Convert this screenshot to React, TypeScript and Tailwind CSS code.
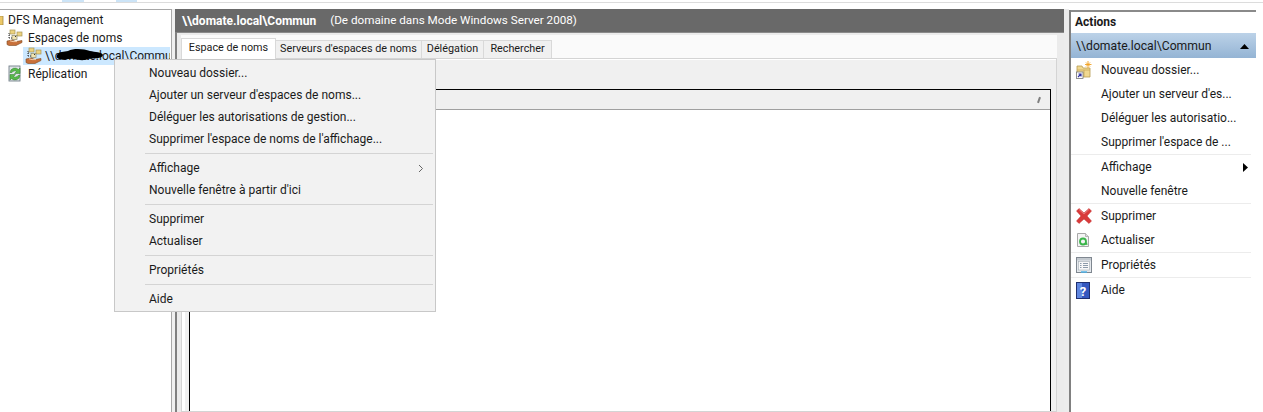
import React from "react";

const font = { fontFamily: 'Roboto, "Noto Sans", sans-serif' };

function NsIcon() {
  return (
    <svg width="18" height="18" viewBox="0 0 18 18" className="shrink-0">
      <rect x="4" y="1" width="5" height="4" fill="#ecd27e" stroke="#a79658" strokeWidth="0.7" />
      <rect x="11" y="3" width="5" height="4" fill="#ecd27e" stroke="#a79658" strokeWidth="0.7" />
      <rect x="6" y="6.500" width="5" height="4" fill="#f2e3ae" stroke="#8a8a70" strokeWidth="0.7" />
      <path d="M3 4v6M3 6h1M3 9h3M9 7.500h2" stroke="#222" strokeWidth="0.900" strokeDasharray="1 1" fill="none" />
      <path d="M1 12 L6 11 L10 12.500 L16 11.500 L16 13.500 L10 16.500 L3 16.500 L1 15.500Z" fill="#c8703a" stroke="#7d4a22" strokeWidth="0.600" />
      <path d="M4 11.800l3 .8h4" stroke="#f3c9a3" strokeWidth="1" fill="none" />
    </svg>
  );
}

function ReplIcon() {
  return (
    <svg width="18" height="18" viewBox="0 0 18 18" className="shrink-0">
      <rect x="3" y="1" width="11" height="15" fill="#dfe4e8" stroke="#74808a" strokeWidth="0.900" />
      <path d="M4 7.500a5 5 0 0 1 8.500-3l1.500-1.500v5.500h-5.500l2-2a3 3 0 0 0-4.500 1Z" fill="#58ba4c" stroke="#2f7d2a" strokeWidth="0.500" />
      <path d="M14 10.500a5 5 0 0 1-8.500 3L4 15V9.500h5.500l-2 2a3 3 0 0 0 4.500-1Z" fill="#58ba4c" stroke="#2f7d2a" strokeWidth="0.500" />
    </svg>
  );
}

function NewFolderIcon() {
  return (
    <svg width="16" height="18" viewBox="0 0 16 18">
      <path d="M1 5h5l1 2h7v9H1Z" fill="#f0d890" stroke="#b89c50" strokeWidth="0.800" />
      <path d="M1 9h13M8 9v7" stroke="#c8a858" strokeWidth="0.800" />
      <path d="M12 0v7M9 3.500h6.500M10 1.500l4 4M14 1.500l-4 4" stroke="#f0a020" strokeWidth="0.900" />
      <rect x="0.500" y="11" width="6.500" height="6.500" fill="#fff" stroke="#777" strokeWidth="0.800" />
      <path d="M2 16l3-3M2.500 13H5v2.500" stroke="#3030a0" strokeWidth="1.200" fill="none" />
    </svg>
  );
}

function XIcon() {
  return (
    <svg width="16" height="16" viewBox="0 0 16 16">
      <path d="M0.500 3 L3 0.500 L8 5 L13 0.500 L15.500 3 L11 8 L15.500 13 L13 15.500 L8 11 L3 15.500 L0.500 13 L5 8Z" fill="#d93a3a" stroke="#c02828" strokeWidth="0.500" />
      <path d="M3 1.500L8 6l5-4.500" stroke="#ee8a8a" strokeWidth="0.800" fill="none" />
    </svg>
  );
}

function RefreshIcon() {
  return (
    <svg width="14" height="16" viewBox="0 0 14 16">
      <path d="M1.500 1.500h8l3 3v10h-11Z" fill="#f4f4f4" stroke="#a8a8a8" strokeWidth="1" />
      <path d="M9.500 1.500v3h3" fill="#ddd" stroke="#a8a8a8" strokeWidth="0.800" />
      <circle cx="7" cy="9.500" r="3" fill="none" stroke="#3bb54a" strokeWidth="1.800" />
      <path d="M8.500 12.500l3 .5-.5-3" fill="#3bb54a" />
    </svg>
  );
}

function PropsIcon() {
  return (
    <svg width="16" height="16" viewBox="0 0 16 16">
      <rect x="0.500" y="0.500" width="15" height="15" fill="#e4e8ec" stroke="#7f8790" strokeWidth="1" />
      <rect x="1" y="1" width="14" height="2.500" fill="#c3c9cf" />
      <rect x="2.500" y="4.500" width="11" height="8.500" fill="#f8f8f8" stroke="#a5adb5" strokeWidth="0.600" />
      <path d="M4 6.500h1.500M7 6.500h5M4 8.500h1.500M7 8.500h5M4 10.500h1.500M7 10.500h5" stroke="#8090a0" strokeWidth="0.900" />
      <path d="M5 15h6" stroke="#4fb3e8" strokeWidth="1.500" />
    </svg>
  );
}

function HelpIcon() {
  return (
    <svg width="14" height="17" viewBox="0 0 14 17">
      <rect x="0.500" y="0.500" width="13" height="16" fill="#3458c0" stroke="#1f2f70" />
      <rect x="1" y="1" width="5" height="15" fill="#5f86e0" />
      <text x="7" y="13.500" textAnchor="middle" fontSize="13" fontWeight="700" fill="#fff" style={font}>?</text>
    </svg>
  );
}

const ACTIONS: Array<{ label: string; icon?: React.ReactNode; arrow?: boolean; divider?: boolean }> = [
  { label: "Nouveau dossier...", icon: <NewFolderIcon /> },
  { label: "Ajouter un serveur d'es..." },
  { label: "Déléguer les autorisatio..." },
  { label: "Supprimer l'espace de ...", divider: true },
  { label: "Affichage", arrow: true },
  { label: "Nouvelle fenêtre", divider: true },
  { label: "Supprimer", icon: <XIcon /> },
  { label: "Actualiser", icon: <RefreshIcon />, divider: true },
  { label: "Propriétés", icon: <PropsIcon />, divider: true },
  { label: "Aide", icon: <HelpIcon /> },
];

const MENU: Array<string[]> = [
  ["Nouveau dossier...", "Ajouter un serveur d'espaces de noms...", "Déléguer les autorisations de gestion...", "Supprimer l'espace de noms de l'affichage..."],
  ["Affichage", "Nouvelle fenêtre à partir d'ici"],
  ["Supprimer", "Actualiser"],
  ["Propriétés"],
  ["Aide"],
];

function Menu() {
  return (
    <div className="absolute left-[114px] top-[59px] w-[322px] border border-[#c8c8c8] bg-[#f2f2f2] pb-[1px] pl-[30px] pr-[2px] pt-[2px] text-[12px] text-[#1a1a1a]">
      {MENU.map((group, i) => (
        <div key={i} className={i > 0 ? "mt-[3px] border-t border-[#d4d4d4] pt-[3px]" : ""}>
          {group.map((label) => (
            <div key={label} className="flex h-[22px] items-center justify-between pl-[4px] pr-[9px]">
              <span>{label}</span>
              {label === "Affichage" && (
                <svg width="6" height="9" viewBox="0 0 6 9"><path d="M1 1l3.500 3.500L1 8" fill="none" stroke="#666" strokeWidth="1" /></svg>
              )}
            </div>
          ))}
        </div>
      ))}
    </div>
  );
}

export default function App() {
  return (
    <div className="relative flex h-[412px] w-[1263px] flex-col overflow-hidden bg-white text-[12px] text-[#1a1a1a]" style={font}>
      <div className="flex h-[2px] items-start bg-white pl-[62px]">
        <div className="h-[2px] w-[22px] bg-[#cce4f7]" />
        <div className="ml-[32px] h-[2px] w-[21px] bg-[#cce4f7]" />
      </div>
      <div className="h-[7px] border-t border-[#dcdcdc] bg-white" />
      <div className="flex min-h-0 flex-1">
        <div className="flex w-[172px] shrink-0 flex-col border-r border-t border-[#a8a8a8] pt-[1px]">
          <div className="relative flex h-[18px] items-center pl-[8px]">
            <svg width="4" height="9" viewBox="0 0 4 9" className="absolute left-0 top-[5px]"><rect x="-3" y="0" width="6" height="9" fill="#ecc868" stroke="#a88a40" strokeWidth="0.800" /></svg>
            DFS Management
          </div>
          <div className="flex h-[18px] items-center gap-[4px] pl-[6px]"><NsIcon /><span>Espaces de noms</span></div>
          <div className="ml-[23px] mr-[1px] flex h-[18px] items-center gap-[2px] overflow-hidden bg-[#cce8ff] pl-[2px]">
            <NsIcon />
            <span className="relative whitespace-nowrap">
              \\domate.local\Commun
              <svg width="48" height="14" viewBox="0 0 48 14" className="absolute left-[11px] top-[1px]">
                <path d="M1 7C3 3 8 4 12 3C18 0 28 1 34 3C39 4 46 4 47 7C46 11 38 10 32 11C28 13 22 12 18 11C12 10 8 13 3 11C1 10 0 9 1 7Z" fill="#000" />
              </svg>
            </span>
          </div>
          <div className="flex h-[18px] items-center gap-[4px] pl-[6px]"><ReplIcon /><span>Réplication</span></div>
        </div>

        <div className="w-[3px] shrink-0 bg-[#f0f0f0]" />

        <div className="flex min-w-0 flex-1 flex-col border-l-2 border-[#808080]">
          <div className="-ml-[2px] flex h-[23px] shrink-0 items-center gap-[14px] bg-[#696969] pl-[7px] text-white">
            <span className="font-bold">\\domate.local\Commun</span>
            <span className="text-[11.700px]">(De domaine dans Mode Windows Server 2008)</span>
          </div>
          <div className="flex min-h-0 flex-1 flex-col border-t border-[#8a8a8a] bg-[#ebebeb] pl-[4px] pr-[7px] pt-[2px]">
            <div className="flex min-h-0 flex-1 flex-col bg-[#fafafa] pt-[3px]">
              <div className="relative z-10 -mb-px flex h-[21px] shrink-0 items-end whitespace-nowrap text-[10.800px]">
                <div className="flex h-[21px] w-[95px] items-center justify-center border border-b-0 border-[#d9d9d9] bg-white pb-[1px]">Espace de noms</div>
                <div className="mb-px flex h-[18px] w-[146px] items-center justify-center border-r border-t border-[#d9d9d9] bg-[#f0f0f0]">Serveurs d'espaces de noms</div>
                <div className="mb-px flex h-[18px] w-[62px] items-center justify-center border-r border-t border-[#d9d9d9] bg-[#f0f0f0]">Délégation</div>
                <div className="mb-px flex h-[18px] w-[68px] items-center justify-center border-r border-t border-[#d9d9d9] bg-[#f0f0f0]">Rechercher</div>
              </div>
              <div className="flex min-h-0 flex-1 flex-col border border-[#d4d4d4] bg-[#f0f0f0]">
                <div className="flex min-h-0 flex-1 flex-col border-l-[3px] border-t border-white pl-[4px] pr-[5px] pt-[29px]">
                  <div className="flex min-h-0 flex-1 flex-col border-x border-t border-black bg-white">
                    <div className="flex h-[20px] shrink-0 items-center justify-end border-b border-[#a0a0a0] bg-[#f0f0f0] pr-[10px]">
                      <span className="block h-[6px] w-[2px] rotate-[20deg] bg-[#808080]" />
                    </div>
                  </div>
                </div>
              </div>
            </div>
          </div>
        </div>

        <div className="w-[5px] shrink-0 bg-[#ececec]" />

        <div className="mr-[7px] mt-[1px] flex w-[187px] shrink-0 flex-col border-l-2 border-[#808080]">
          <div className="flex h-[23px] shrink-0 items-center border-t-2 border-[#8a8a8a] pb-[1px] pl-[4px] font-bold">Actions</div>
          <div className="flex h-[25px] shrink-0 items-center justify-between bg-gradient-to-b from-[#bcd2e8] to-[#94b4d4] pl-[5px] pr-[7px] pt-[1px] text-[12.200px]">
            <span>\\domate.local\Commun</span>
            <svg width="9" height="5" viewBox="0 0 9 5"><path d="M0 5L4.500 0L9 5Z" fill="#000" /></svg>
          </div>
          <div className="pr-[5px]">
            {ACTIONS.map((a) => (
              <div key={a.label} className={`flex items-start ${a.divider ? "h-[25px] border-b border-[#ececec]" : "h-[24px]"}`}>
                <div className="flex h-[24px] w-[30px] shrink-0 items-center pl-[5px]">{a.icon}</div>
                <span className="flex h-[24px] flex-1 items-center whitespace-nowrap">{a.label}</span>
                {a.arrow && (
                  <div className="flex h-[24px] items-center pr-[3px]">
                    <svg width="5" height="9" viewBox="0 0 5 9"><path d="M0 0L5 4.500L0 9Z" fill="#000" /></svg>
                  </div>
                )}
              </div>
            ))}
          </div>
        </div>
      </div>
      <Menu />
    </div>
  );
}
